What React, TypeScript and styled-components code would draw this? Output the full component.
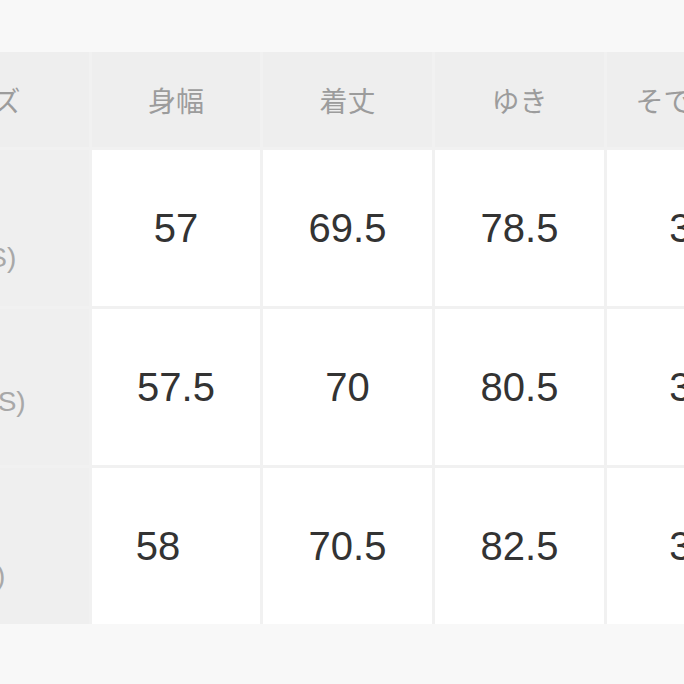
import React from "react";
import styled, { createGlobalStyle } from "styled-components";

const Global = createGlobalStyle`
  html, body { margin: 0; padding: 0; background: #f8f8f8; }
  * { box-sizing: border-box; }
`;

const Page = styled.div`
  width: 684px;
  height: 684px;
  overflow: hidden;
  background: #f8f8f8;
  padding-top: 52px;
`;

const Table = styled.div`
  display: grid;
  grid-template-columns: 220px 168px 169px 169px 169px;
  grid-template-rows: 95px repeat(3, 156px);
  gap: 3px;
  width: max-content;
  background: #f1f1f1;
  margin-left: -131px;
`;

const HeadCell = styled.div`
  background: #eeeeee;
  display: flex;
  align-items: center;
  justify-content: center;
  font-family: "Noto Sans CJK JP", "Noto Sans", sans-serif;
  font-size: 28px;
  color: #9c9c9c;
  white-space: nowrap;
`;

const LabelCell = styled.div`
  background: #efefef;
  display: flex;
  flex-direction: column;
  align-items: center;
  justify-content: center;
  font-family: "Liberation Sans", "Noto Sans CJK JP", sans-serif;
  font-size: 28px;
  line-height: 29px;
  color: #a8a8a8;
  white-space: nowrap;
`;

const ValueCell = styled.div<{ $shift?: number }>`
  background: #ffffff;
  display: flex;
  align-items: center;
  justify-content: center;
  padding-right: ${(p) => p.$shift ?? 0}px;
  font-family: "Liberation Sans", Arial, sans-serif;
  font-size: 40px;
  color: #333333;
  white-space: nowrap;
`;

const headers = ["サイズ", "身幅", "着丈", "ゆき", "そで口幅"];

const rows: { label: string[]; values: string[]; shift?: number[] }[] = [
  { label: ["XS", "", "(XXS)"], values: ["57", "69.5", "78.5", "35"] },
  { label: ["S", "(日本S)"], values: ["57.5", "70", "80.5", "36"] },
  { label: ["M", "", "(XL)"], values: ["58", "70.5", "82.5", "37"], shift: [36, 0, 0, 0] },
];

export default function App() {
  return (
    <>
      <Global />
      <Page>
        <Table>
          {headers.map((h) => (
            <HeadCell key={h}>{h}</HeadCell>
          ))}
          {rows.map((r, ri) => (
            <React.Fragment key={ri}>
              <LabelCell>
                {r.label.map((l, li) => (
                  <span key={li}>{l || "\u00a0"}</span>
                ))}
              </LabelCell>
              {r.values.map((v, vi) => (
                <ValueCell key={vi} $shift={r.shift?.[vi]}>
                  {v}
                </ValueCell>
              ))}
            </React.Fragment>
          ))}
        </Table>
      </Page>
    </>
  );
}
